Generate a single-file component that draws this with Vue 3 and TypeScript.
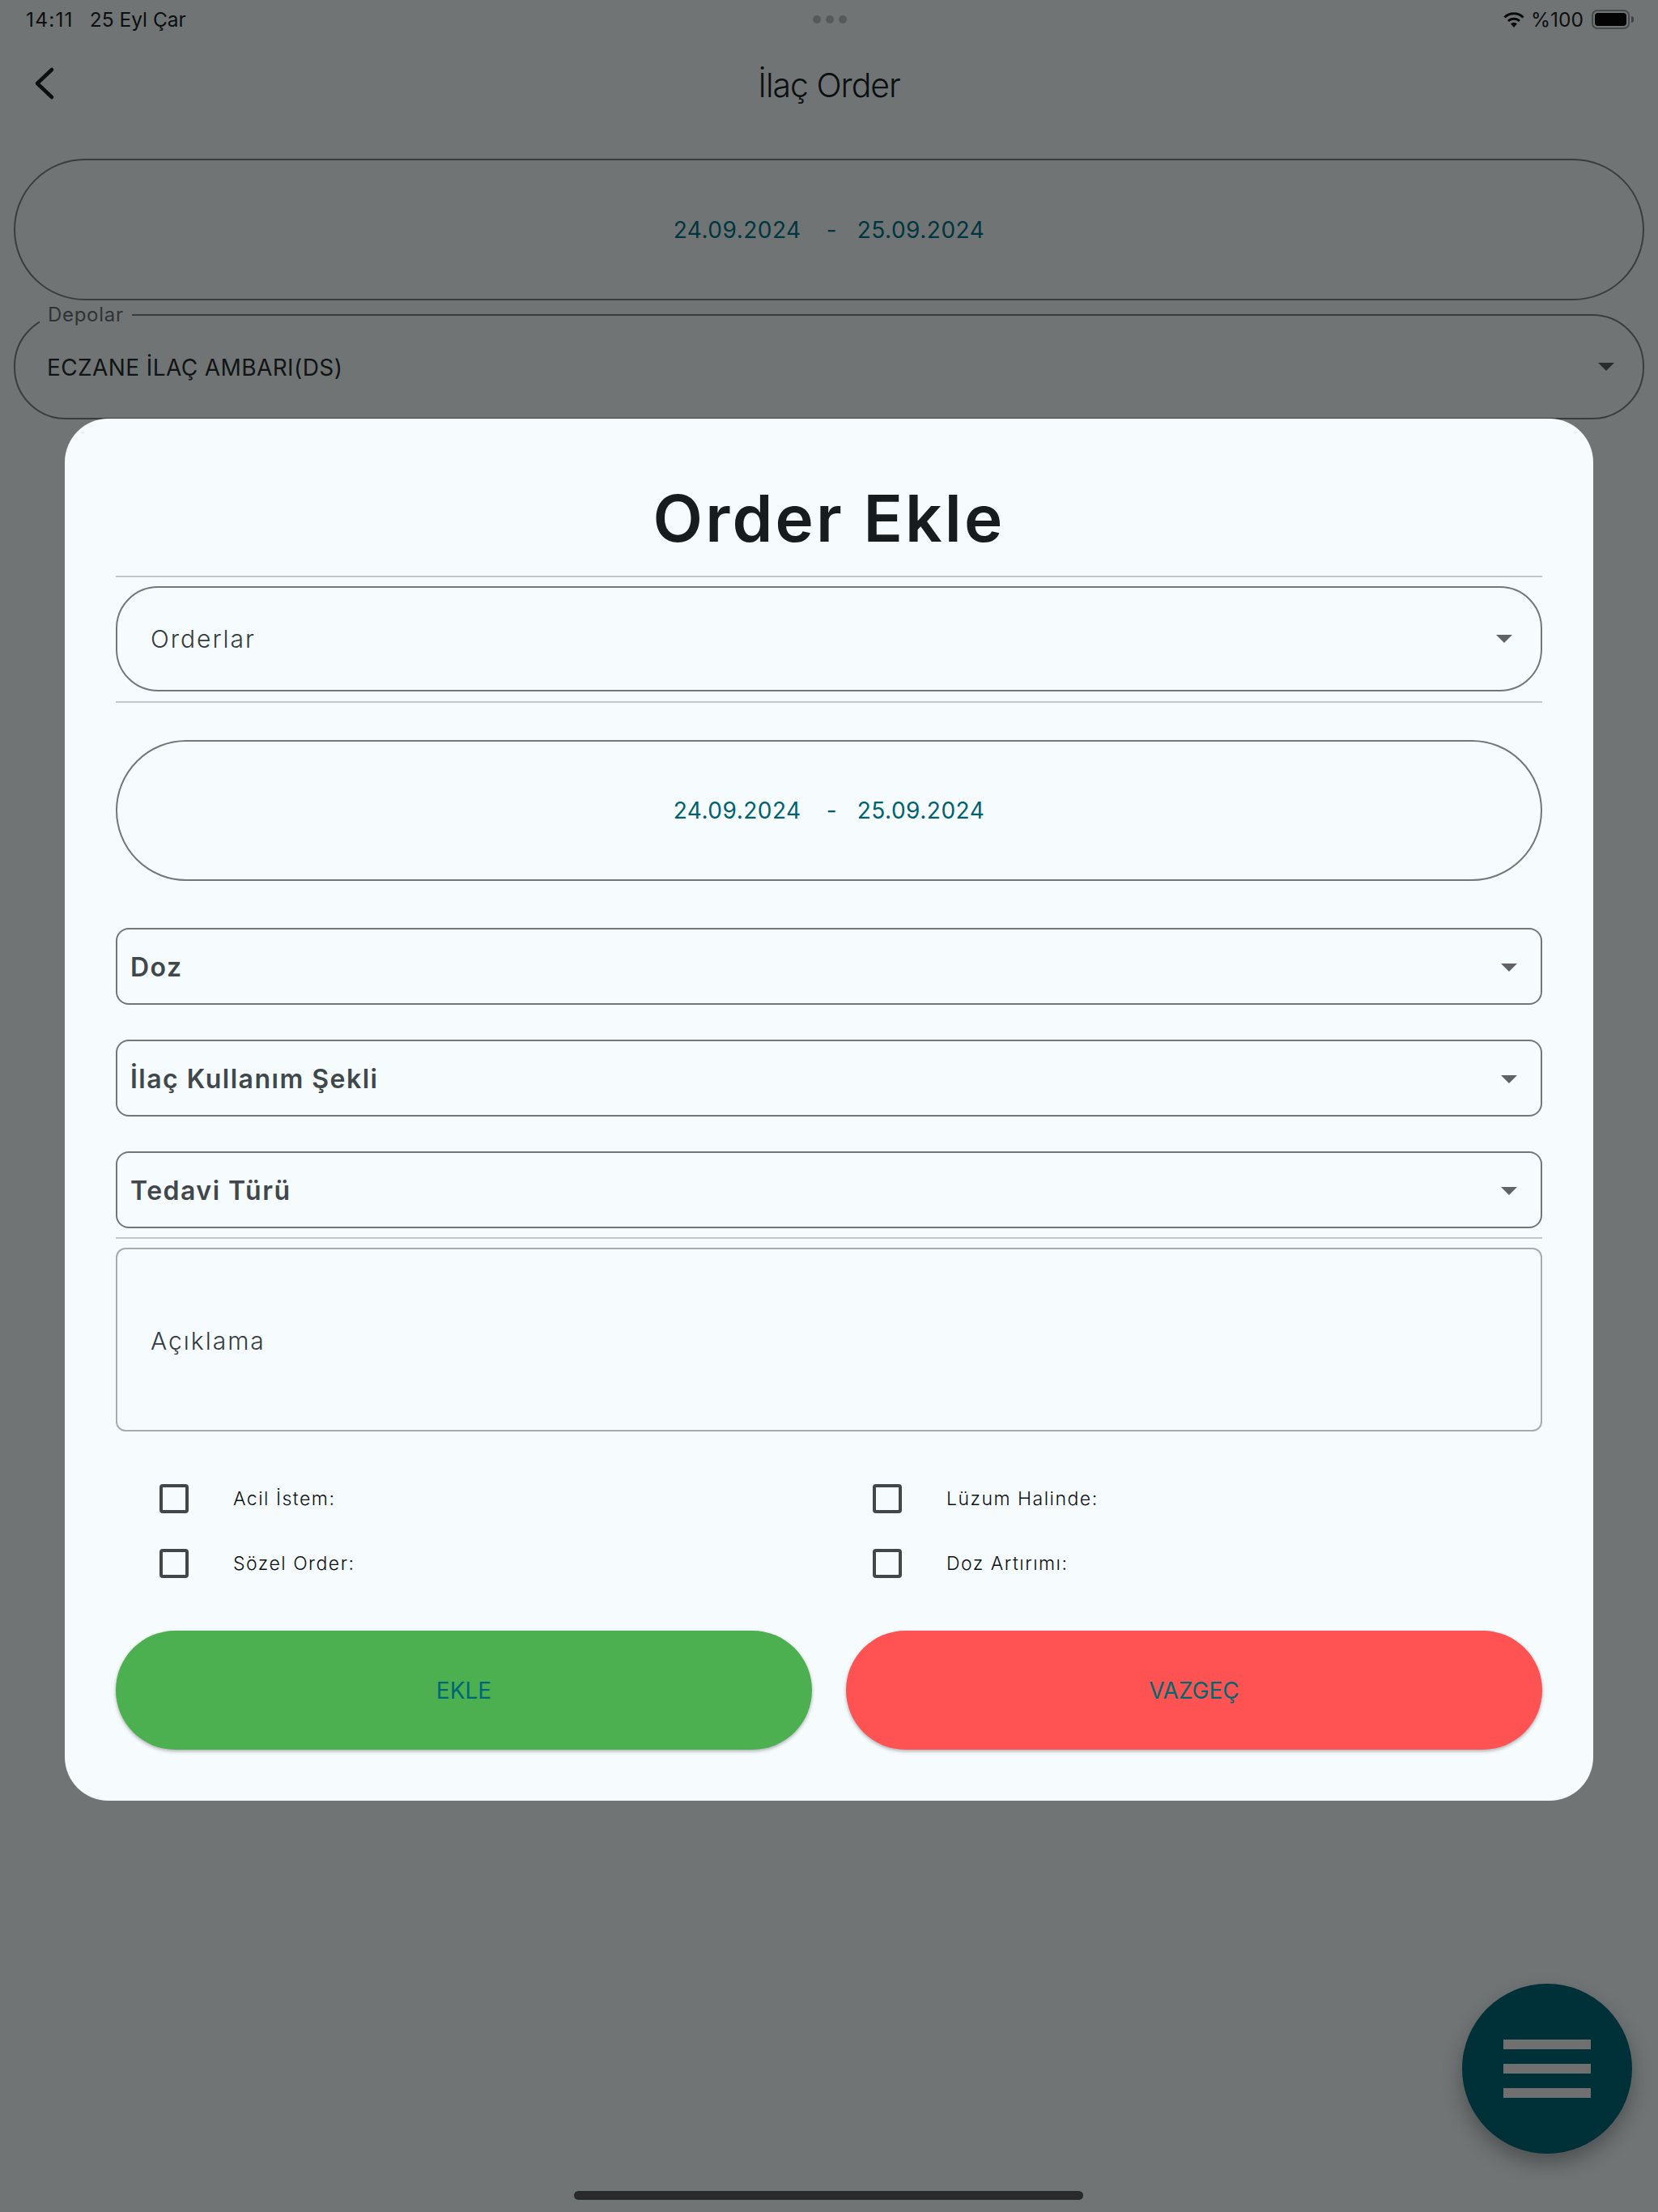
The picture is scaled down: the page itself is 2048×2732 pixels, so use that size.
<script setup lang="ts">
const selects: string[] = ['Doz', 'İlaç Kullanım Şekli', 'Tedavi Türü']
const checks: string[] = ['Acil İstem:', 'Lüzum Halinde:', 'Sözel Order:', 'Doz Artırımı:']
</script>

<template>
  <div class="page">
    <div class="status">
      <span class="status-left"><span class="time">14:11</span><span>25 Eyl Çar</span></span>
      <span class="dots"><i></i><i></i><i></i></span>
      <span class="status-right">
        <svg class="wifi" width="26" height="20" viewBox="0 0 26 20" aria-hidden="true">
          <path d="M1.500 7.500A16.500 16.500 0 0 1 24.500 7.500" fill="none" stroke="#0a0a0a" stroke-width="3"/>
          <path d="M6 12A10 10 0 0 1 20 12" fill="none" stroke="#0a0a0a" stroke-width="3"/>
          <path d="M13 20L9 15.200A6 6 0 0 1 17 15.200Z" fill="#0a0a0a"/>
        </svg>
        <span class="pct">%100</span>
        <span class="battery"><b></b></span>
        <span class="nub"></span>
      </span>
    </div>

    <div class="nav">
      <svg class="back" width="28" height="42" viewBox="0 0 28 42" aria-hidden="true">
        <path d="M24 4L6 21L24 38" fill="none" stroke="#0c0f10" stroke-width="4.500" stroke-linecap="round" stroke-linejoin="round"/>
      </svg>
      <h2 class="nav-title">İlaç Order</h2>
    </div>

    <div class="bg-date">
      <span>24.09.2024</span><span class="dash">-</span><span>25.09.2024</span>
    </div>

    <div class="bg-select">
      <span class="bg-label">Depolar</span>
      <span class="bg-value">ECZANE İLAÇ AMBARI(DS)</span>
      <span class="arrow arrow-dark"></span>
    </div>

    <section class="modal">
      <h1 class="modal-title">Order Ekle</h1>
      <div class="divider"></div>
      <div class="orders">
        <span>Orderlar</span>
        <span class="arrow arrow-orders"></span>
      </div>
      <div class="divider divider-orders"></div>
      <div class="modal-date">
        <span>24.09.2024</span><span class="dash">-</span><span>25.09.2024</span>
      </div>
      <div class="select-list">
        <div v-for="s in selects" :key="s" class="select">
          <span>{{ s }}</span>
          <span class="arrow"></span>
        </div>
      </div>
      <div class="divider divider-note"></div>
      <div class="note">Açıklama</div>
      <div class="checks">
        <label v-for="c in checks" :key="c" class="check">
          <span class="box"></span>
          <span class="check-label">{{ c }}</span>
        </label>
      </div>
      <div class="actions">
        <button class="btn btn-add" type="button">EKLE</button>
        <button class="btn btn-cancel" type="button">VAZGEÇ</button>
      </div>
    </section>

    <button class="fab" type="button" aria-label="Menü"><i></i><i></i><i></i></button>
    <div class="home"></div>
  </div>
</template>

<style>
html, body { margin: 0; padding: 0; background: #707475; }
</style>

<style scoped>
.page {
  position: relative;
  width: 2048px;
  height: 2732px;
  overflow: hidden;
  background: #707475;
  font-family: Inter, "Noto Sans", sans-serif;
  color: #0c0f10;
}
.status {
  height: 48px;
  display: grid;
  grid-template-columns: 1fr auto 1fr;
  align-items: center;
  padding: 0 30px 0 32px;
  font-size: 24.500px;
}
.status-left { display: flex; gap: 20px; }
.time { letter-spacing: 1.200px; }
.dots { display: flex; gap: 6px; }
.dots i { width: 10px; height: 10px; border-radius: 50%; background: #55595a; }
.status-right { display: flex; align-items: center; justify-content: flex-end; }
.wifi { margin-right: 8px; }
.pct { margin-right: 10px; }
.battery {
  box-sizing: border-box;
  width: 47px;
  height: 24px;
  padding: 2px;
  border: 2px solid #47494a;
  border-radius: 7px;
  display: flex;
}
.battery b { flex: 1; border-radius: 4px; background: #030303; }
.nub { width: 3px; height: 8px; margin-left: 2px; border-radius: 0 3px 3px 0; background: #3e4243; }
.nav {
  position: relative;
  height: 112px;
  display: flex;
  align-items: center;
  justify-content: center;
}
.back { position: absolute; left: 40px; top: 34px; }
.nav-title { margin: 0; padding-top: 2px; font-size: 41px; font-weight: 300; letter-spacing: -1px; color: #0c0f10; }
.bg-date {
  box-sizing: border-box;
  height: 175px;
  margin: 36px 17px 0 17px;
  border: 2px solid #393d3e;
  border-radius: 88px;
  display: flex;
  align-items: center;
  justify-content: center;
  gap: 29px;
  font-size: 28px;
  letter-spacing: 0.500px;
  color: #00363f;
}
.dash { width: 11px; margin: 0 -2px 0 2px; text-align: center; }
.bg-select {
  position: relative;
  box-sizing: border-box;
  height: 130px;
  margin: 17px 17px 0 17px;
  padding: 0 35px 0 39px;
  border: 2px solid #393d3e;
  border-radius: 64px;
  display: flex;
  align-items: center;
  justify-content: space-between;
}
.bg-label {
  position: absolute;
  left: 30px;
  top: -16px;
  padding: 0 10px;
  background: #707475;
  font-size: 24px;
  letter-spacing: 0.700px;
  color: #2f3334;
}
.bg-value { padding-top: 2px; font-size: 28px; letter-spacing: 0.400px; color: #101415; }
.arrow {
  width: 0;
  height: 0;
  border-left: 10px solid transparent;
  border-right: 10px solid transparent;
  border-top: 10px solid #606263;
}
.arrow-dark { border-top-color: #2a2d2e; }
.modal {
  position: absolute;
  left: 80px;
  top: 517px;
  box-sizing: border-box;
  width: 1888px;
  height: 1707px;
  padding: 0 63px;
  border-radius: 54px;
  background: #f6fbfe;
}
.modal-title {
  margin: 0;
  height: 194px;
  line-height: 245px;
  text-align: center;
  font-size: 80px;
  font-weight: 600;
  letter-spacing: 3.200px;
  color: #171c1f;
}
.divider { height: 2px; background: #c2c7cb; }
.orders {
  box-sizing: border-box;
  height: 130px;
  margin-top: 11px;
  padding: 0 35px 0 41px;
  border: 2px solid #70787c;
  border-radius: 52px;
  display: flex;
  align-items: center;
  justify-content: space-between;
  font-size: 30px;
  font-weight: 300;
  letter-spacing: 2px;
  color: #343c40;
}
.divider-orders { margin-top: 12px; }
.modal-date {
  box-sizing: border-box;
  height: 174px;
  margin-top: 46px;
  border: 2px solid #70787c;
  border-radius: 87px;
  display: flex;
  align-items: center;
  justify-content: center;
  gap: 29px;
  font-size: 28px;
  letter-spacing: 0.500px;
  color: #00626f;
}
.select-list {
  margin-top: 58px;
  display: flex;
  flex-direction: column;
  gap: 43px;
}
.select {
  box-sizing: border-box;
  height: 95px;
  padding: 2px 29px 0 16px;
  border: 2px solid #70787c;
  border-radius: 16px;
  display: flex;
  align-items: center;
  justify-content: space-between;
  font-size: 32px;
  font-weight: 600;
  letter-spacing: 1.500px;
  color: #40484c;
}
.divider-note { margin-top: 11px; }
.note {
  box-sizing: border-box;
  height: 227px;
  margin-top: 11px;
  padding: 2px 0 0 41px;
  border: 2px solid #a6acb0;
  border-radius: 12px;
  display: flex;
  align-items: center;
  font-size: 30px;
  font-weight: 300;
  letter-spacing: 2px;
  color: #343c40;
}
.checks {
  margin-top: 65px;
  padding-left: 54px;
  display: grid;
  grid-template-columns: 881px 1fr;
  row-gap: 44px;
}
.check { display: flex; align-items: center; height: 36px; }
.box {
  box-sizing: border-box;
  width: 36px;
  height: 36px;
  border: 4px solid #40484c;
  border-radius: 4px;
}
.check-label {
  margin-left: 55px;
  font-size: 23px;
  font-weight: 300;
  letter-spacing: 1.500px;
  color: #0c1012;
}
.actions {
  margin-top: 65px;
  display: grid;
  grid-template-columns: 860px 860px;
  justify-content: space-between;
}
.btn {
  height: 147px;
  border: 0;
  border-radius: 74px;
  font-family: inherit;
  font-size: 28px;
  font-weight: 400;
  letter-spacing: 0;
  color: #00696f;
  box-shadow: 0 2px 4px rgba(0, 0, 0, 0.3);
}
.btn-add { background: #4caf50; color: #006778; }
.btn-cancel { background: #ff5252; }
.fab {
  position: absolute;
  left: 1806px;
  top: 2450px;
  width: 210px;
  height: 210px;
  padding: 0;
  border: 0;
  border-radius: 50%;
  background: #003038;
  box-shadow: 0 12px 24px rgba(0, 0, 0, 0.3);
  display: flex;
  flex-direction: column;
  align-items: center;
  justify-content: center;
  gap: 18px;
}
.fab i { width: 108px; height: 12px; background: #707070; }
.home {
  position: absolute;
  left: 709px;
  top: 2706px;
  width: 629px;
  height: 11px;
  border-radius: 6px;
  background: #2a2a2a;
}
</style>
